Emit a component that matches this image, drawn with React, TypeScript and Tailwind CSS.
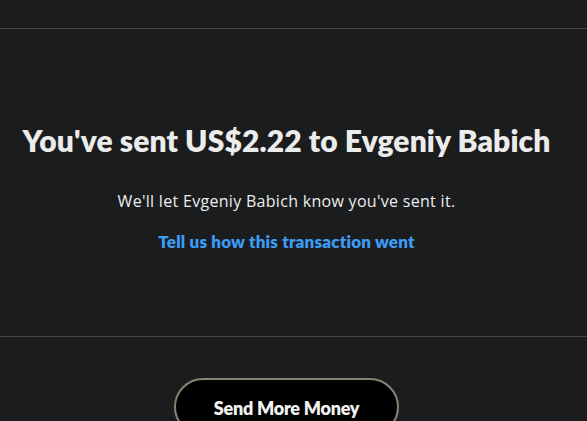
export default function App() {
  return (
    <div className="min-h-[421px] w-full bg-[#1b1c1e] font-['Lato',sans-serif] overflow-hidden">
      <div className="h-[29px] border-b border-[#444548]" />
      <div className="flex flex-col items-center pr-[14px] pt-[93px] pb-[82px] border-b border-[#444548] h-[308px]">
        <h1 className="text-[30px] leading-[36px] font-extrabold text-[#ececec] tracking-[0.1px] whitespace-nowrap">
          You've sent US$2.22 to Evgeniy Babich
        </h1>
        <p className="mt-[31px] text-[16px] leading-[24px] text-[#ececec] tracking-[0.3px] font-['Open_Sans',sans-serif]">
          We'll let Evgeniy Babich know you've sent it.
        </p>
        <a className="mt-[17px] text-[17px] leading-[24px] font-extrabold text-[#3d9cf5] tracking-[0.2px]">
          Tell us how this transaction went
        </a>
      </div>
      <div className="flex justify-center pr-[14px] pt-[41px]">
        <button className="w-[225px] h-[58px] rounded-full border-2 border-[#8b8272] bg-black text-[#f2f2f2] text-[18px] font-extrabold tracking-[-0.25px] pt-[2px]">
          Send More Money
        </button>
      </div>
    </div>
  );
}
